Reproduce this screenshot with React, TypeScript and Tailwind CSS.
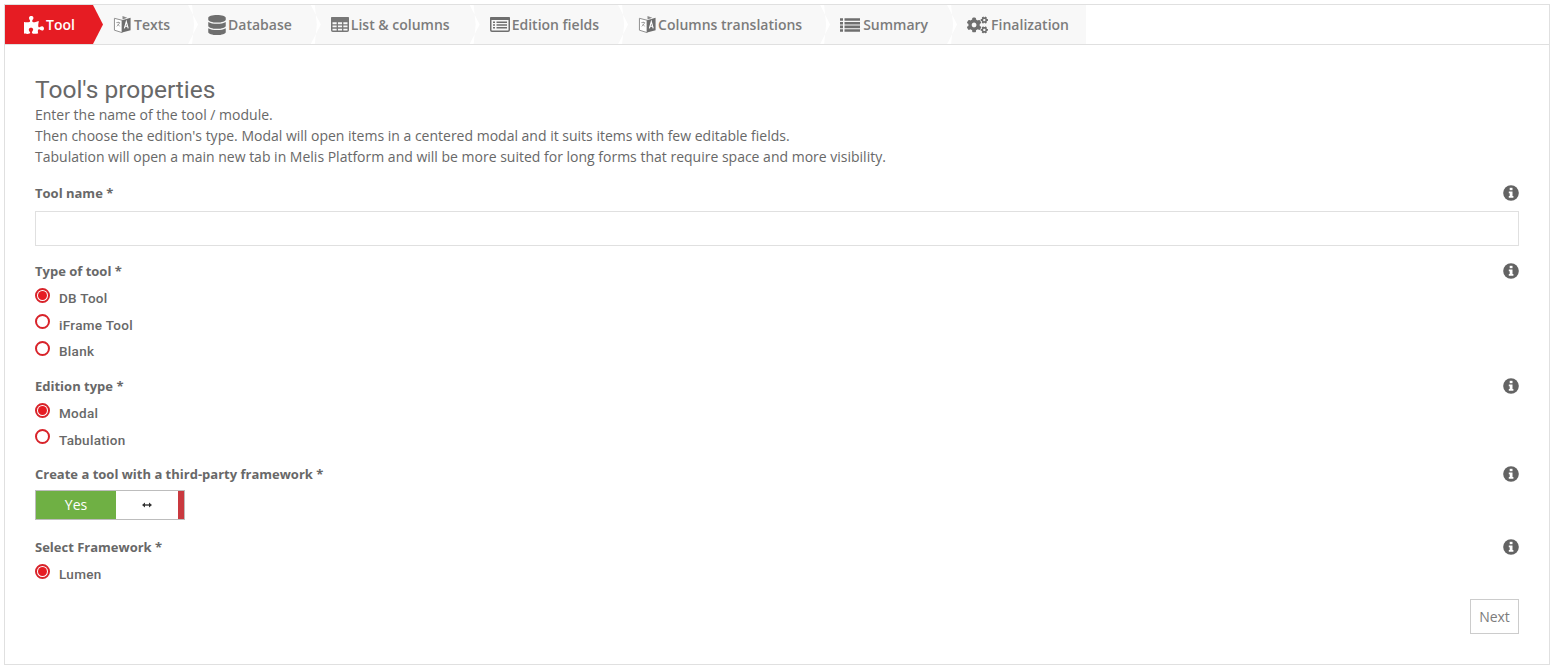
import React from 'react';
import { FaPuzzlePiece, FaDatabase, FaCogs } from 'react-icons/fa';

// translate icon, two folded pages with glyphs
function TranslateIcon() {
  return (
    <svg viewBox="0 0 20 20" className="w-[19px] h-[19px] shrink-0">
      <path d="M1.5 3.5 L9.5 5.5 V18.5 L1.5 16 Z" fill="#fff" stroke="#8a8a8a" strokeWidth="1" />
      <path d="M3.5 8 h4 M5.5 7v1 M4 12 L7 8.5 M5 9.5 L7 12" stroke="#8a8a8a" strokeWidth="0.8" fill="none" />
      <path d="M9.5 5.5 L18.5 3 V16 L9.5 18.5 Z" fill="#6d6d6d" />
      <path d="M10 1 L15 3 L10 4.8 Z" fill="#8a8a8a" />
      <path d="M12 14 L14 7 L16 14 M12.8 11.8 h2.4" stroke="#fff" strokeWidth="1.2" fill="none" />
    </svg>
  );
}

function TableIcon() {
  return (
    <svg viewBox="0 0 18 15" className="w-[18px] h-[15px]">
      <rect x="0.75" y="0.75" width="16.5" height="13.5" rx="1" fill="#f8f8f8" stroke="#777" strokeWidth="1.5" />
      <path d="M0 4.6 H18 M0 7.8 H18 M0 11 H18 M6.3 4 V15 M11.7 4 V15" stroke="#777" strokeWidth="1.3" />
      <rect x="0" y="0" width="18" height="4" rx="1" fill="#777" />
    </svg>
  );
}

function ListAltIcon() {
  return (
    <svg viewBox="0 0 20 15" className="w-[20px] h-[15px]">
      <rect x="0.75" y="0.75" width="18.5" height="13.5" rx="1.2" fill="#f8f8f8" stroke="#6f6f6f" strokeWidth="1.5" />
      <rect x="0" y="0" width="20" height="3" rx="1" fill="#6f6f6f" />
      <path d="M3 5.2 H5 M3 8 H5 M3 10.8 H5 M6.5 5.2 H17 M6.5 8 H17 M6.5 10.8 H17" stroke="#6f6f6f" strokeWidth="1.5" />
    </svg>
  );
}

function ListIcon() {
  return (
    <svg viewBox="0 0 20 14" className="w-[20px] h-[14px]">
      <path d="M0 1.5 H3 M0 5.2 H3 M0 8.9 H3 M0 12.5 H3 M4.5 1.5 H20 M4.5 5.2 H20 M4.5 8.9 H20 M4.5 12.5 H20" stroke="#6f6f6f" strokeWidth="2.6" />
    </svg>
  );
}

function InfoIcon() {
  return (
    <svg viewBox="0 0 16 16" className="w-[16px] h-[16px] mt-[1px] shrink-0">
      <circle cx="8" cy="8" r="7.8" fill="#636363" />
      <rect x="6.7" y="2.8" width="2.8" height="2.4" fill="#fff" />
      <path d="M5.8 6.5 H9.5 V11 H10.4 V12.8 H5.8 V11 H6.7 V8.2 H5.8 Z" fill="#fff" />
    </svg>
  );
}

const steps = [
  { label: 'Texts', icon: <TranslateIcon />, row: 'gap-[2px] pr-[18px]' },
  { label: 'Database', icon: <FaDatabase className="w-[18px] h-[20px]" />, row: 'gap-[2px] pr-[19px]' },
  { label: 'List & columns', icon: <TableIcon />, row: 'gap-[2px] pr-[20px]' },
  { label: 'Edition fields', icon: <ListAltIcon />, row: 'gap-[2px] pr-[19px]' },
  { label: 'Columns translations', icon: <TranslateIcon />, row: 'gap-[1px] pr-[18px]' },
  { label: 'Summary', icon: <ListIcon />, row: 'gap-[3px] pr-[19px]' },
  { label: 'Finalization', icon: <FaCogs className="w-[21px] h-[18px]" />, row: 'gap-[3px] pr-[17px]' },
];

function Label({ text }: { text: string }) {
  return (
    <div className="flex items-start justify-between h-[20px]">
      <span className="text-[13px] leading-[18px] font-bold text-[#686868]">{text}</span>
      <InfoIcon />
    </div>
  );
}

function Radio({ label, checked }: { label: string; checked?: boolean }) {
  return (
    <div className="flex items-center h-[26.5px]">
      <span className="w-[15px] h-[15px] mb-[6px] rounded-full border-2 border-[#d8232a] flex items-center justify-center">
        {checked && <span className="w-[9px] h-[9px] rounded-full bg-[#e61c23]" />}
      </span>
      <span className="ml-[9px] font-['Roboto',sans-serif] text-[13.5px] font-medium tracking-[0.3px] text-[#686868]">{label}</span>
    </div>
  );
}

export default function App() {
  return (
    <div className="h-[669px] bg-white pt-[4px] pl-[4px] pr-[5px] font-['Open_Sans',sans-serif]">
      <div className="h-[661px] border border-[#e0e0e0]">
        {/* Steps */}
        <div className="h-[40px] border-b border-[#e0e0e0]">
          <ul className="flex h-[39px] w-fit bg-[#f8f8f8]">
            <li className="relative flex items-center gap-[2px] w-[88px] pl-[19px] bg-[#e61c23] text-white text-[14px] font-semibold">
              <FaPuzzlePiece className="w-[20px] h-[18px]" />
              <span>Tool</span>
              <span className="absolute left-full top-0 h-full w-[10px] bg-[#e61c23] [clip-path:polygon(0_0,100%_50%,0_100%)]" />
            </li>
            {steps.map((step, i) => (
              <li
                key={step.label}
                className={`relative flex items-center pl-[20px] ${step.row} text-[14px] font-semibold text-[#7c7c7c]`}
              >
                {i > 0 && (
                  <span className="absolute left-0 top-0 h-full w-[10px] bg-white [clip-path:polygon(0_0,100%_50%,0_100%,40%_100%,60%_50%,40%_0)]" />
                )}
                <span className="text-[#6f6f6f] flex">{step.icon}</span>
                <span>{step.label}</span>
              </li>
            ))}
          </ul>
        </div>

        {/* Form */}
        <div className="px-[30px] pt-[30px]">
          <h1 className="font-['Roboto',sans-serif] text-[24.5px] leading-[30px] text-[#686868]">Tool's properties</h1>
          <p className="-mt-[1px] text-[14px] leading-[21px] text-[#686868]">
            Enter the name of the tool / module.
            <br />
            Then choose the edition's type. Modal will open items in a centered modal and it suits items with few editable fields.
            <br />
            Tabulation will open a main new tab in Melis Platform and will be more suited for long forms that require space and more visibility.
          </p>

          <div className="mt-[17px]">
            <Label text="Tool name *" />
            <div className="mt-[7px] h-[35px] border border-[#e0e0e0]" />
          </div>

          <div className="mt-[16px]">
            <Label text="Type of tool *" />
            <div className="mt-[3px]">
              <Radio label="DB Tool" checked />
              <Radio label="iFrame Tool" />
              <Radio label="Blank" />
            </div>
          </div>

          <div className="mt-[12.5px]">
            <Label text="Edition type *" />
            <div className="mt-[3px]">
              <Radio label="Modal" checked />
              <Radio label="Tabulation" />
            </div>
          </div>

          <div className="mt-[12px]">
            <Label text="Create a tool with a third-party framework *" />
            <div className="mt-[5px] flex w-[150px] h-[30px] border border-[#bdbdbd]">
              <span className="w-[80px] pb-[1px] bg-[#6fb044] text-white text-[14px] flex items-center justify-center">Yes</span>
              <span className="flex-1 flex items-center justify-center">
                <svg viewBox="0 0 10 6" className="w-[10px] h-[6px]">
                  <path d="M0 3 L3 0.5 V5.5 Z M10 3 L7 0.5 V5.5 Z" fill="#333" />
                  <path d="M2 3 H8" stroke="#333" strokeWidth="1.4" />
                </svg>
              </span>
              <span className="w-[6px] bg-[#c9393f]" />
            </div>
          </div>

          <div className="mt-[18px]">
            <Label text="Select Framework *" />
            <div className="mt-[3px]">
              <Radio label="Lumen" checked />
            </div>
          </div>

          <div className="flex justify-end mt-[11px]">
            <button className="w-[49px] h-[35px] border border-[#cccccc] text-[14px] text-[#7c7c7c]">Next</button>
          </div>
        </div>
      </div>
    </div>
  );
}
